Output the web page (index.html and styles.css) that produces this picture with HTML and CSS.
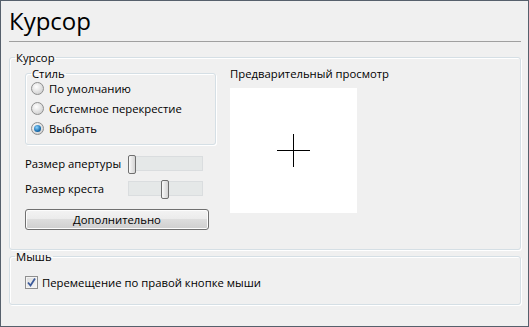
FILE: index.html
```html
<!DOCTYPE html>
<html lang="ru">

<head>
    <meta charset="UTF-8">
    <title>Курсор</title>
    <link rel="stylesheet" href="styles.css">
</head>

<body>
    <div class="window">
        <h1 class="title">Курсор</h1>

        <fieldset class="group group-cursor">
            <legend>Курсор</legend>
            <div class="cols">
                <div class="left">
                    <fieldset class="group group-style">
                        <legend>Стиль</legend>
                        <label class="radio"><span class="dot"></span>По умолчанию</label>
                        <label class="radio"><span class="dot"></span>Системное перекрестие</label>
                        <label class="radio"><span class="dot on"></span>Выбрать</label>
                    </fieldset>

                    <div class="slider-row first">
                        <span class="slider-label">Размер апертуры</span>
                        <div class="track"><span class="thumb thumb-start"></span></div>
                    </div>
                    <div class="slider-row">
                        <span class="slider-label">Размер креста</span>
                        <div class="track"><span class="thumb thumb-mid"></span></div>
                    </div>

                    <div class="btn">Дополнительно</div>
                </div>

                <div class="right">
                    <div class="preview-label">Предварительный просмотр</div>
                    <div class="preview">
                        <svg width="34" height="34" viewBox="0 0 34 34">
                            <path d="M0 16.5H33M16.5 0V33" stroke="#000" stroke-width="1" />
                        </svg>
                    </div>
                </div>
            </div>
        </fieldset>

        <fieldset class="group group-mouse">
            <legend>Мышь</legend>
            <label class="check">
                <span class="box">
                    <svg width="11" height="11" viewBox="0 0 11 11">
                        <path d="M2 5.5L4.5 8.5L9 1.5" fill="none" stroke="#3c5a9a" stroke-width="1.8" />
                    </svg>
                </span>
                Перемещение по правой кнопке мыши
            </label>
        </fieldset>
    </div>
</body>

</html>
```

FILE: styles.css
```css
* {
    box-sizing: border-box;
}

body {
    margin: 0;
    font-family: 'Open Sans', 'Liberation Sans', sans-serif;
    font-size: 11.3px;
    color: #000;
}

.window {
    width: 529px;
    height: 327px;
    background-color: #f0f0f0;
    border: 1px solid #56606c;
    padding: 0 7px 0 8px;
}

.title {
    margin: 0;
    font-weight: normal;
    font-size: 24px;
    line-height: 40px;
    height: 41px;
    border-bottom: 1px solid #a0a0a0;
}

.group {
    margin: 0;
    border: 1px solid #d5dfe5;
    border-radius: 3px;
    box-shadow: 1px 1px 0 #fff, inset 1px 1px 0 #fff;
}

.group legend {
    padding: 0 1px;
    line-height: 15px;
}

.group-cursor {
    margin-top: 8px;
    height: 200px;
    padding: 0 0 0 15px;
}

.group-cursor > legend {
    margin-left: -10px;
}

.cols {
    display: flex;
    gap: 14px;
}

.left {
    width: 191px;
}

.group-style {
    margin-top: 1px;
    height: 79px;
    padding: 0 0 0 5px;
}

.radio {
    display: flex;
    align-items: center;
    gap: 5px;
    height: 20px;
}

.radio:first-of-type {
    margin-top: -3px;
}

.dot {
    width: 13px;
    height: 13px;
    border-radius: 50%;
    border: 1px solid #8e8f8f;
    background: radial-gradient(circle at 40% 35%, #ffffff, #d6d6d6 70%, #c8c8c8);
    position: relative;
}

.dot.on::after {
    content: '';
    position: absolute;
    left: 2px;
    top: 2px;
    width: 7px;
    height: 7px;
    border-radius: 50%;
    background: radial-gradient(circle at 40% 35%, #8fd5ff, #1a6fb0 60%, #0c3f70);
}

.slider-row {
    display: flex;
    align-items: center;
    height: 25px;
}

.slider-row.first {
    margin-top: 6px;
}

.slider-label {
    width: 103px;
}

.track {
    position: relative;
    width: 75px;
    height: 15px;
    background-color: #e5e8e8;
    border: 1px solid #dadddf;
}

.thumb {
    position: absolute;
    top: -2px;
    width: 8px;
    height: 19px;
    border: 1px solid #6f6f6f;
    border-radius: 2px;
    background: linear-gradient(90deg, #fafafa, #e6e6e6 50%, #d4d4d4);
}

.thumb-start {
    left: -1px;
}

.thumb-mid {
    left: 32px;
}

.btn {
    margin-top: 8px;
    width: 184px;
    height: 21px;
    border: 1px solid #707070;
    border-radius: 3px;
    background: linear-gradient(#f3f3f3, #ebebeb 50%, #dddddd 50%, #cfcfcf);
    box-shadow: inset 0 0 0 1px #fcfcfc;
    text-align: center;
    line-height: 19px;
}

.preview-label {
    margin-top: 1px;
    line-height: 16px;
}

.preview {
    margin-top: 6px;
    width: 127px;
    height: 125px;
    background-color: #fff;
    display: flex;
    align-items: center;
    justify-content: center;
}

.group-mouse {
    margin-top: -1px;
    height: 56px;
    padding: 11px 0 0 15px;
}

.group-mouse > legend {
    margin-left: -10px;
}

.check {
    display: flex;
    align-items: center;
    gap: 4px;
}

.box {
    width: 13px;
    height: 13px;
    border: 1px solid #8f8f8f;
    background: linear-gradient(135deg, #dcdcdc, #f6f6f6);
    box-shadow: inset 0 0 0 1px #f4f4f4;
    display: flex;
    align-items: center;
    justify-content: center;
}
```
